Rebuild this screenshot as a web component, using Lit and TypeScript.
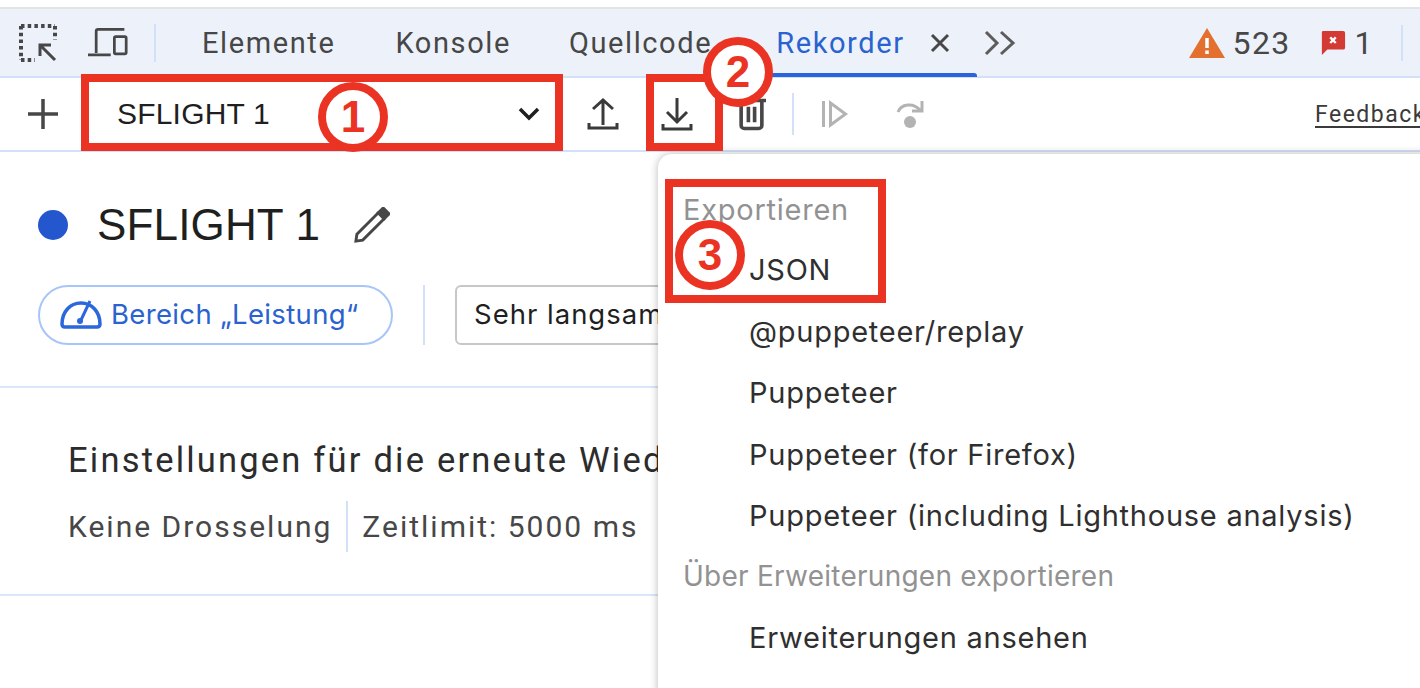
import { LitElement, html, css } from "lit";
import { customElement } from "lit/decorators.js";

@customElement("app-root")
export class AppRoot extends LitElement {
  static styles = css`
    :host { display: block; width: 1420px; height: 688px; position: relative; overflow: hidden; background: #fff; font-family: Roboto, "Liberation Sans", sans-serif; color: #1f1f1f; }
    .topline { height: 7px; border-bottom: 2px solid #e4e4e4; }
    .tabbar { height: 67px; background: #edf2fa; border-bottom: 2px solid #d3e1f8; display: flex; align-items: center; padding-left: 18px; color: #474747; font-size: 29px; letter-spacing: 1.6px; position: relative; }
    .tabbar svg, .toolbar svg { display: block; flex: none; }
    .vsep { width: 2px; background: #d3e1f8; flex: none; }
    .tabbar .vsep { height: 38px; }
    .tab { flex: none; line-height: 34px; }
    .active { color: #2a62cf; }
    .under { position: absolute; left: 725px; top: 64px; width: 252px; height: 4px; background: #2b63dc; border-radius: 3px 3px 0 0; }
    .count { font-size: 32px; letter-spacing: 1.3px; }
    .toolbar { height: 72px; border-bottom: 2px solid #d3e1f8; display: flex; align-items: center; padding-left: 26px; white-space: nowrap; }
    .toolbar .vsep { height: 42px; }
    .recname { width: 423px; margin-left: 57px; font: 400 30px "Liberation Sans", sans-serif; letter-spacing: 0.2px; color: #1f1f1f; display: flex; align-items: center; justify-content: space-between; flex: none; }
    .feedback { font-size: 23px; letter-spacing: 1.5px; color: #3a3a3a; text-decoration: underline; text-underline-offset: 4px; margin-left: 389px; }
    .head { display: flex; align-items: center; padding: 50px 0 0 38px; height: 46px; }
    .dot { width: 30px; height: 30px; border-radius: 50%; background: #2457cd; flex: none; }
    h1 { margin: 0 0 0 29px; font: 400 44px "Liberation Sans", sans-serif; letter-spacing: 0.15px; color: #1f1f1f; }
    .head svg { margin-left: 33px; }
    .actions { display: flex; align-items: center; margin: 37px 0 0 38px; height: 60px; }
    .chip { width: 355px; height: 60px; box-sizing: border-box; border: 2px solid #a8c5f7; border-radius: 30px; display: flex; align-items: center; gap: 9px; padding: 0 0 2px 20px; color: #2a62cf; font: 400 27.5px Inter, sans-serif; letter-spacing: 0.35px; flex: none; }
    .actions .vsep { height: 60px; margin-left: 30px; }
    .select { margin-left: 30px; width: 300px; height: 60px; box-sizing: border-box; border: 2px solid #c7c7c7; border-radius: 6px; padding: 0 0 2px 17px; display: flex; align-items: center; font: 400 27.5px Inter, sans-serif; letter-spacing: 1px; flex: none; white-space: nowrap; overflow: hidden; }
    .rule { height: 2px; background: #dbe6f9; }
    .r1 { margin-top: 41px; }
    .settings { padding: 51px 0 0 68px; height: 206px; box-sizing: border-box; }
    .settings .t { font-size: 34.5px; letter-spacing: 2.2px; color: #2c2c2c; line-height: 42px; white-space: nowrap; }
    .meta { display: flex; align-items: center; margin-top: 20px; font-size: 30px; letter-spacing: 2px; color: #474747; white-space: nowrap; }
    .meta .vsep { height: 51px; margin: 0 14px 0 14px; }
    .menu { position: absolute; left: 658px; top: 154px; width: 780px; height: 560px; background: #fff; border-radius: 14px 0 0 0; box-shadow: 0 0 9px rgba(0,0,0,.28); font: 400 29px Inter, sans-serif; letter-spacing: 0.75px; color: #2f2f2f; }
    .menu div { position: absolute; white-space: nowrap; line-height: 36px; }
    .menu .g { left: 25px; color: #929292; }
    .menu .g2 { font-size: 28px; letter-spacing: 0.25px; }
    .menu .i { left: 91px; }
    .box { position: absolute; box-sizing: border-box; border: 8px solid #ea3323; }
    .num { position: absolute; box-sizing: border-box; width: 70px; height: 70px; border: 8px solid #ea3323; border-radius: 50%; background: #fff; color: #ea3323; font: 700 44px/54px "Liberation Sans", sans-serif; text-align: center; }
  `;

  render() {
    return html`
      <div class="topline"></div>
      <div class="tabbar">
        <svg width="40" height="40" viewBox="0 0 40 40" fill="none" stroke="#474747"><path d="M3 3h34M3 3v34M37 3v14M3 37h14" stroke-width="4" stroke-dasharray="3.5 3.2"/><path d="M37 37 22 22M22 33V22h11" stroke-width="3"/></svg>
        <svg style="margin-left:30px" width="40" height="36" viewBox="0 0 44 36" fill="none" stroke="#474747" stroke-width="3"><path d="M40 3H11a2 2 0 0 0-2 2v24M0 31h25"/><rect x="29" y="11" width="13" height="19" rx="1.5"/></svg>
        <div class="vsep" style="margin-left:26px"></div>
        <span class="tab" style="margin-left:46px">Elemente</span>
        <span class="tab" style="margin-left:60px">Konsole</span>
        <span class="tab" style="margin-left:58px">Quellcode</span>
        <span class="tab active" style="margin-left:64px">Rekorder</span>
        <svg style="margin-left:25px" width="20" height="20" viewBox="0 0 20 20" stroke="#474747" stroke-width="3"><path d="M2 2l16 16M18 2 2 18"/></svg>
        <svg style="margin-left:34px" width="32" height="26" viewBox="0 0 32 26" fill="none" stroke="#5c5c5c" stroke-width="3"><path d="M2 2l11 11L2 24M17 2l12 11-12 11"/></svg>
        <svg style="margin-left:173px" width="36" height="30" viewBox="0 0 36 30"><path d="M18 0 36 30H0z" fill="#e4702f"/><path d="M18 10v10M18 22.500v3.500" stroke="#fff" stroke-width="3.500"/></svg>
        <span class="count" style="margin-left:8px">523</span>
        <svg style="margin-left:30px" width="26" height="26" viewBox="0 0 28 28"><path d="M3 1h22a2 2 0 0 1 2 2v16a2 2 0 0 1-2 2H8l-6 6V2z" fill="#d33a33"/><path d="M11 8l6 6M17 8l-6 6" stroke="#fff" stroke-width="2.500"/></svg>
        <span class="count" style="margin-left:8px">1</span>
        <div class="vsep" style="margin-left:27px;height:36px"></div>
        <div class="under"></div>
      </div>
      <div class="toolbar">
        <svg width="34" height="34" viewBox="0 0 34 34" stroke="#474747" stroke-width="3.500"><path d="M17 2v30M2 17h30"/></svg>
        <div class="recname"><span>SFLIGHT 1</span>
          <svg width="22" height="14" viewBox="0 0 22 14" fill="none" stroke="#1f1f1f" stroke-width="3.500"><path d="M2 2l9 9 9-9"/></svg></div>
        <svg style="margin-left:47px" width="32" height="34" viewBox="0 0 32 34" fill="none" stroke="#3a3a3a" stroke-width="3"><path d="M16 28V3M6 12l10-9 10 9M2 26v5h28v-5"/></svg>
        <svg style="margin-left:42px" width="32" height="34" viewBox="0 0 32 34" fill="none" stroke="#3a3a3a" stroke-width="3"><path d="M16 1v24M6 15l10 10 10-10M2 27v5h28v-5"/></svg>
        <svg style="margin-left:44px" width="29" height="34" viewBox="0 0 28 32" fill="none" stroke="#474747" stroke-width="3.500"><path d="M0 3h28M4 3v24a3 3 0 0 0 3 3h14a3 3 0 0 0 3-3V3M11 9v15M17 9v15"/></svg>
        <div class="vsep" style="margin-left:26px"></div>
        <svg style="margin-left:27px" width="28" height="28" viewBox="0 0 27 28" fill="none" stroke="#b3b3b3" stroke-width="3"><path d="M2 1v26M9 3l15 11L9 25z"/></svg>
        <svg style="margin-left:47px" width="30" height="30" viewBox="0 0 30 30" fill="none" stroke="#b3b3b3" stroke-width="3"><path d="M2 13c3-8 15-10 22-2M26 2v10H16"/><circle cx="14" cy="23" r="6" fill="#b3b3b3" stroke="none"/></svg>
        <span class="feedback">Feedback</span>
      </div>
      <div class="head">
        <div class="dot"></div>
        <h1>SFLIGHT 1</h1>
        <svg width="37" height="37" viewBox="0 0 38 38" fill="none" stroke="#474747" stroke-width="3"><path d="M3 35l1-7L26 6l6 6-22 22z"/><path d="M26 6l5-5 6 6-5 5z" fill="#474747"/></svg>
      </div>
      <div class="actions">
        <div class="chip">
          <svg width="42" height="32" viewBox="0 0 42 32" fill="none" stroke="#2b68dc" stroke-width="3.500"><path d="M5 29h32c2 0 3-1 3-3C40 14 32 5 21 5 10 5 2 14 2 26c0 2 1 3 3 3z"/><path d="M30 3 L21 22" stroke-width="3"/><circle cx="20" cy="23" r="3" fill="#2b68dc" stroke="none"/></svg>
          <span>Bereich „Leistung“</span>
        </div>
        <div class="vsep"></div>
        <div class="select">Sehr langsames 3G</div>
      </div>
      <div class="rule r1"></div>
      <div class="settings">
        <div class="t">Einstellungen für die erneute Wiedergabe</div>
        <div class="meta"><span>Keine Drosselung</span><div class="vsep"></div><span>Zeitlimit: 5000 ms</span></div>
      </div>
      <div class="rule"></div>

      <div class="menu">
        <div class="g" style="top:38px">Exportieren</div>
        <div class="i" style="top:98px">JSON</div>
        <div class="i" style="top:160px">@puppeteer/replay</div>
        <div class="i" style="top:221px">Puppeteer</div>
        <div class="i" style="top:283px">Puppeteer (for Firefox)</div>
        <div class="i" style="top:344px">Puppeteer (including Lighthouse analysis)</div>
        <div class="g g2" style="top:404px">Über Erweiterungen exportieren</div>
        <div class="i" style="top:466px">Erweiterungen ansehen</div>
      </div>

      <div class="box" style="left:81px;top:74px;width:482px;height:77px"></div>
      <div class="box" style="left:646px;top:74px;width:77px;height:77px"></div>
      <div class="box" style="left:665px;top:179px;width:221px;height:124px"></div>
      <div class="num" style="left:318px;top:82px">1</div>
      <div class="num" style="left:703px;top:37px">2</div>
      <div class="num" style="left:675px;top:220px">3</div>
    `;
  }
}
